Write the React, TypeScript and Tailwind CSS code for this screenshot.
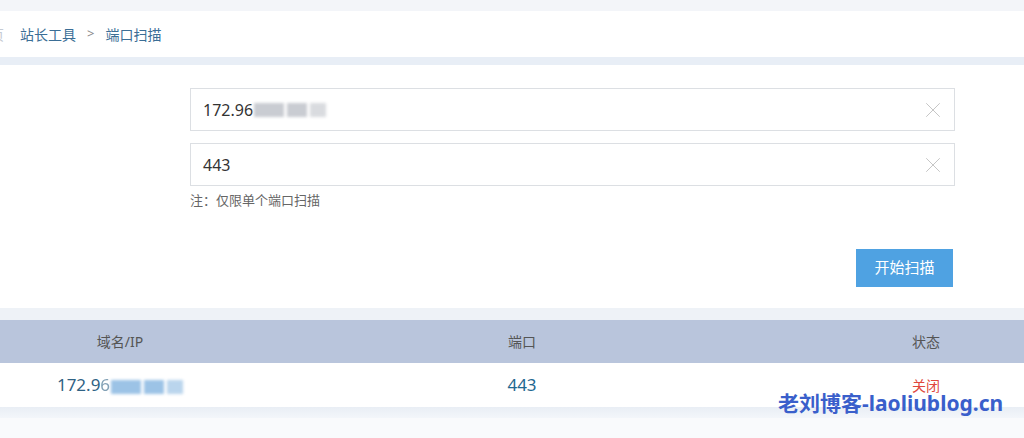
import { X } from 'lucide-react';

const font = { fontFamily: '"Noto Sans", "Noto Sans CJK SC", sans-serif' };

function Blurred({ tint }: { tint: string }) {
  return (
    <span className="inline-flex items-center gap-[3px] blur-[1.5px] align-middle ml-[1px]">
      <span className={`inline-block w-[30px] h-[14px] ${tint}`} />
      <span className={`inline-block w-[20px] h-[14px] ${tint}`} />
      <span className={`inline-block w-[16px] h-[14px] ${tint} opacity-70`} />
    </span>
  );
}

function Field({ value, blurred }: { value: string; blurred?: boolean }) {
  return (
    <div className="flex items-center h-[43px] border border-[#dcdfe3] bg-white pl-[12px] pr-[8px]">
      <div className="flex-1 flex items-center text-[16px] text-[#333]">
        {value}
        {blurred && <Blurred tint="bg-[#c9ccd2]" />}
      </div>
      <X className="w-[26px] h-[26px] text-[#bdbdbd]" strokeWidth={0.8} />
    </div>
  );
}

export default function App() {
  return (
    <div className="relative w-[1024px] h-[438px] overflow-hidden bg-[#f3f5f9]" style={font}>
      <div className="h-[11px]" />
      {/* breadcrumb */}
      <div className="h-[46px] bg-white flex items-center text-[14px] text-[#3b6e96] overflow-hidden">
        <span className="-ml-[10px] w-[14px] text-[#c5cbd3]">页</span>
        <span className="ml-[16px]">站长工具</span>
        <span className="mx-[11px] text-[#888] text-[13px]">&gt;</span>
        <span>端口扫描</span>
      </div>
      <div className="h-[8px] bg-[#e8eef6]" />

      {/* form panel */}
      <div className="h-[243px] bg-white pt-[23px] pl-[190px] pr-[69px]">
        <div className="flex flex-col gap-[12px]">
          <Field value="172.96" blurred />
          <Field value="443" />
        </div>
        <div className="mt-[5px] text-[13px] text-[#666]">注：仅限单个端口扫描</div>
        <div className="flex justify-end mt-[38px] pr-[2px]">
          <button className="w-[97px] h-[38px] bg-[#4fa2e2] text-white text-[15px]">开始扫描</button>
        </div>
      </div>
      <div className="h-[12px] bg-[#eef2f7]" />

      {/* result table */}
      <div className="grid grid-cols-[240px_564px_244px] h-[43px] bg-[#b9c5dc] items-center text-center text-[14px] text-[#555]">
        <div>域名/IP</div>
        <div>端口</div>
        <div>状态</div>
      </div>
      <div className="grid grid-cols-[240px_564px_244px] h-[44px] bg-white items-center text-center text-[17px]">
        <div className="text-[#2f6284]">
          172.9<span className="opacity-60">6</span>
          <Blurred tint="bg-[#9cc3e6]" />
        </div>
        <div className="text-[#1f6890]">443</div>
        <div className="text-[14px] text-[#e0473c]">关闭</div>
      </div>
      <div className="h-[11px] bg-gradient-to-b from-[#e9eef5] to-[#f3f6fa]" />
      <div className="h-[20px] bg-[#f9fafc]" />

      {/* watermark */}
      <div className="absolute left-[778px] top-[388px] text-[21px] font-bold text-[#3a5fcb] whitespace-nowrap">
        老刘博客-laoliublog.cn
      </div>
    </div>
  );
}
